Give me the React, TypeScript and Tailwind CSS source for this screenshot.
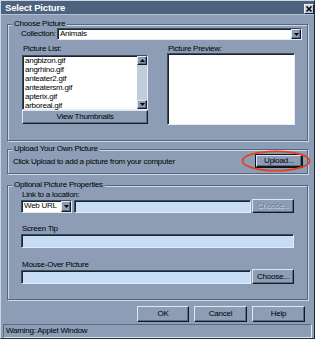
import React from "react";

const raised =
  "border border-t-[#dfe7f1] border-l-[#dfe7f1] border-r-[#141b26] border-b-[#141b26] shadow-[inset_-1px_-1px_0_#5b6b82] bg-[#8c9db5]";
const sunken =
  "border border-t-[#3b4a5f] border-l-[#3b4a5f] border-r-[#e3ebf5] border-b-[#e3ebf5] shadow-[inset_1px_1px_0_#1c2430]";
const group =
  "shrink-0 flex flex-col border border-[#55667d] shadow-[inset_1px_1px_0_#cdd8e6,1px_1px_0_#cdd8e6]";

function DownArrow() {
  return (
    <svg width="5" height="3" viewBox="0 0 5 3">
      <path d="M0 0H5L2.5 3Z" fill="#000" />
    </svg>
  );
}
function UpArrow() {
  return (
    <svg width="5" height="3" viewBox="0 0 5 3">
      <path d="M0 3H5L2.5 0Z" fill="#000" />
    </svg>
  );
}

function Legend({ children }: { children: React.ReactNode }) {
  return (
    <div className="-mt-[5px] ml-[4px] self-start px-[2px] h-[8px] leading-[8px] bg-[#8c9db5] whitespace-nowrap">
      {children}
    </div>
  );
}

function Btn({ children, className = "" }: { children: React.ReactNode; className?: string }) {
  return (
    <div className={`${raised} flex items-center justify-center leading-[8px] whitespace-nowrap ${className}`}>
      {children}
    </div>
  );
}

export default function App() {
  const items = ["angbizon.gif", "angrhino.gif", "anteater2.gif", "anteatersm.gif", "apterix.gif", "arboreal.gif"];
  return (
    <div className="w-[315px] h-[339px] overflow-hidden bg-[#8c9db5] font-['Liberation_Sans',Arial,sans-serif] text-[8px] tracking-[-0.25px] text-black border border-t-[#cbd5e3] border-l-[#cbd5e3] border-r-[#222b38] border-b-[#222b38] flex flex-col">
      {/* title bar */}
      <div className="shrink-0 h-[14px] bg-[#4d627c] border-b border-b-[#b5c2d4] flex items-center justify-between pl-[4px] pr-[0px]">
        <span className="text-white font-bold text-[9.5px] tracking-[-0.2px] leading-[10px]">Select Picture</span>
        <div className="w-[10px] h-[10px] mt-[2px] bg-[#c3cedc] border border-t-[#eef2f7] border-l-[#eef2f7] border-r-[#1b2330] border-b-[#1b2330] flex items-center justify-center">
          <svg width="6" height="6" viewBox="0 0 6 6">
            <path d="M0.5 0.5L5.5 5.5M5.5 0.5L0.5 5.5" stroke="#000" strokeWidth="1.5" />
          </svg>
        </div>
      </div>

      <div className="flex flex-col px-[6px]">
        {/* Choose Picture */}
        <div className={`${group} mt-[9px] h-[117px]`}>
          <Legend>Choose Picture</Legend>
          <div className="flex items-center pl-[13px] pr-[5px] mt-[0px] h-[12px]">
            <span className="w-[36px] leading-[8px]">Collection:</span>
            <div className={`${sunken} flex-1 h-[12px] bg-white flex items-center`}>
              <span className="flex-1 pl-[2px] leading-[8px]">Animals</span>
              <div className={`${raised} w-[10px] h-[10px] flex items-center justify-center`}>
                <DownArrow />
              </div>
            </div>
          </div>
          <div className="flex pl-[14px] pr-[12px] mt-[5px]">
            <div className="w-[126px] flex flex-col">
              <span className="leading-[8px] h-[9px] pl-[1px]">Picture List:</span>
              <div className={`${sunken} mt-[1px] h-[55px] bg-white flex`}>
                <div className="flex-1 flex flex-col pl-[2px] pt-[0px]">
                  {items.map((t) => (
                    <span key={t} className="leading-[9px] h-[9px] shrink-0">
                      {t}
                    </span>
                  ))}
                </div>
                <div className="w-[10px] flex flex-col bg-[#bfcddd]">
                  <div className={`${raised} h-[9px] flex items-center justify-center`}>
                    <UpArrow />
                  </div>
                  <div className="flex-1" />
                  <div className={`${raised} h-[9px] flex items-center justify-center`}>
                    <DownArrow />
                  </div>
                </div>
              </div>
              <Btn className="h-[14px] mt-[0px]">View Thumbnails</Btn>
            </div>
            <div className="ml-[19px] w-[128px] flex flex-col">
              <span className="leading-[8px] h-[8px] pl-[1px]">Picture Preview:</span>
              <div className={`${sunken} h-[72px] bg-white`} />
            </div>
          </div>
        </div>

        {/* Upload */}
        <div className={`${group} mt-[8px] h-[25px]`}>
          <Legend>Upload Your Own Picture</Legend>
          <div className="flex items-center justify-between pl-[5px] pr-[4px] mt-[1px]">
            <span className="leading-[8px] mt-[1px]">Click Upload to add a picture from your computer</span>
            <div className="relative">
              <div className="border border-[#0e141d] w-[48px] h-[14px] flex">
                <Btn className="flex-1">Upload...</Btn>
              </div>
              <svg
                className="absolute left-[-14px] top-[-4px] pointer-events-none"
                width="70"
                height="22"
                viewBox="0 0 70 22"
              >
                <ellipse cx="35" cy="11" rx="33.5" ry="9.7" fill="none" stroke="#e8401c" strokeWidth="1.8" />
              </svg>
            </div>
          </div>
        </div>

        {/* Optional */}
        <div className={`${group} mt-[11px] h-[115px]`}>
          <Legend>Optional Picture Properties</Legend>
          <div className="flex flex-col pl-[13px] pr-[13px]">
            <span className="leading-[8px] h-[8px] mt-[2px] pl-[1px]">Link to a location:</span>
            <div className="flex items-center h-[14px] mt-[0px]">
              <div className={`${sunken} w-[51px] h-[13px] bg-white flex items-center`}>
                <span className="flex-1 pl-[2px] leading-[8px]">Web URL</span>
                <div className={`${raised} w-[10px] h-[11px] flex items-center justify-center`}>
                  <DownArrow />
                </div>
              </div>
              <div className={`${sunken} ml-[2px] flex-1 h-[13px] bg-[#c6ddf5]`} />
              <Btn className="ml-[1px] w-[42px] h-[14px] text-[#6d7d94] [text-shadow:1px_1px_0_#c9d5e5]">Choose...</Btn>
            </div>

            <span className="leading-[8px] h-[8px] mt-[12px] pl-[1px]">Screen Tip</span>
            <div className={`${sunken} mt-[1px] h-[14px] bg-[#c6ddf5]`} />

            <span className="leading-[8px] h-[8px] mt-[13px] pl-[1px]">Mouse-Over Picture</span>
            <div className="flex items-center h-[15px] mt-[0px]">
              <div className={`${sunken} flex-1 h-[14px] bg-[#c6ddf5]`} />
              <Btn className="ml-[1px] w-[42px] h-[15px]">Choose...</Btn>
            </div>
          </div>
        </div>

        {/* buttons */}
        <div className="shrink-0 flex justify-end gap-[5px] pr-[3px] mt-[6px] h-[16px]">
          <Btn className="w-[52px]">OK</Btn>
          <Btn className="w-[53px]">Cancel</Btn>
          <Btn className="w-[53px]">Help</Btn>
        </div>
      </div>

      {/* status bar */}
      <div className="shrink-0 mt-[2px] mx-[2px] h-[14px] border border-t-[#5b6b82] border-l-[#5b6b82] border-r-[#dfe7f1] border-b-[#dfe7f1] flex items-center pl-[2px]">
        <span className="leading-[8px]">Warning: Applet Window</span>
      </div>
    </div>
  );
}
